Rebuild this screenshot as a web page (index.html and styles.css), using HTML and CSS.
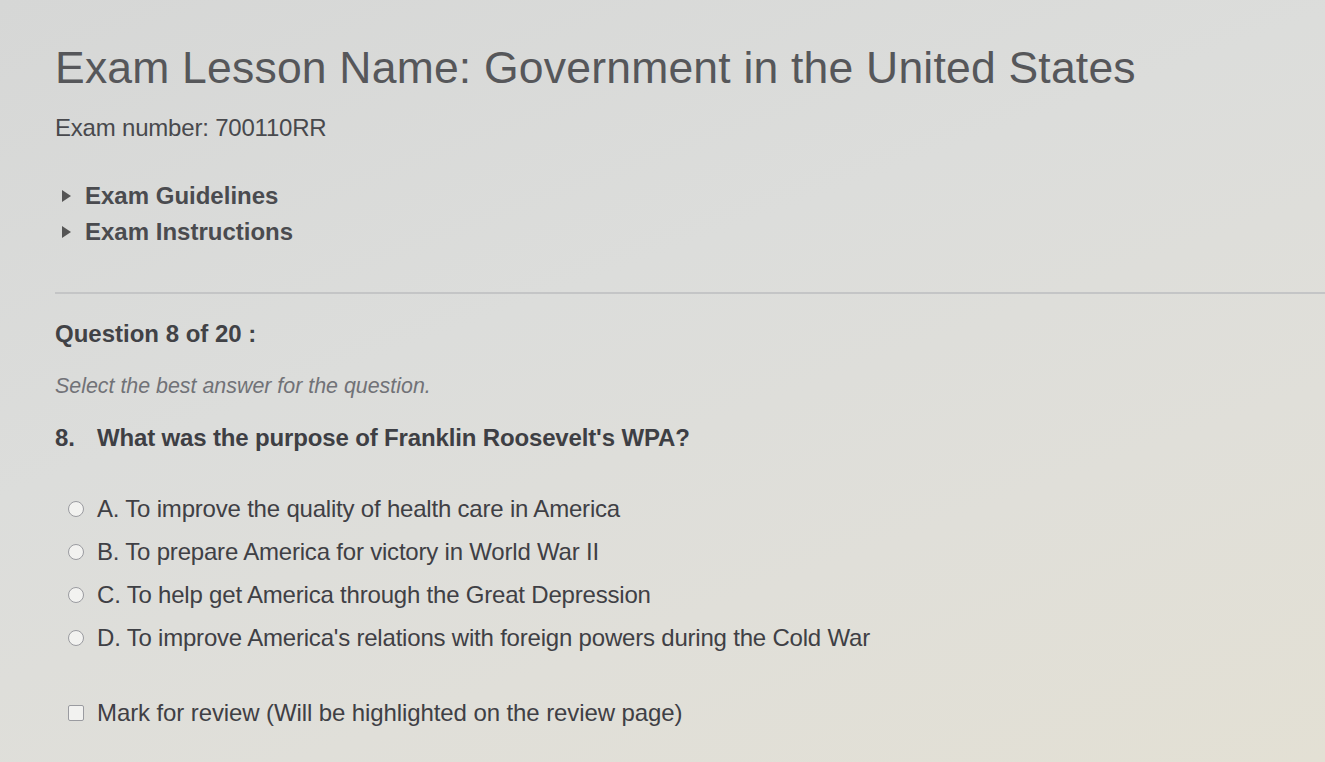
FILE: index.html
```html
<!DOCTYPE html>
<html>
<head>
<meta charset="utf-8">
<link rel="stylesheet" href="styles.css">
</head>
<body>
<div class="page">
  <h1 class="title">Exam Lesson Name: Government in the United States</h1>
  <div class="examnum">Exam number: 700110RR</div>
  <ul class="toggles">
    <li><span class="tri"></span>Exam Guidelines</li>
    <li><span class="tri"></span>Exam Instructions</li>
  </ul>
  <hr class="divider">
  <div class="qhead">Question 8 of 20 :</div>
  <div class="hint">Select the best answer for the question.</div>
  <div class="question"><span class="qnum">8.</span>What was the purpose of Franklin Roosevelt's WPA?</div>
  <ul class="options">
    <li><span class="radio"></span>A. To improve the quality of health care in America</li>
    <li><span class="radio"></span>B. To prepare America for victory in World War II</li>
    <li><span class="radio"></span>C. To help get America through the Great Depression</li>
    <li><span class="radio"></span>D. To improve America's relations with foreign powers during the Cold War</li>
  </ul>
  <div class="review"><span class="check"></span>Mark for review (Will be highlighted on the review page)</div>
</div>
</body>
</html>
```
FILE: styles.css
```css
html, body {
  margin: 0;
  padding: 0;
}
body {
  width: 1325px;
  height: 762px;
  overflow: hidden;
  background: linear-gradient(160deg, #d6d7d6 0%, #dcdddb 40%, #e0dfd9 70%, #e3e0d4 100%);
  font-family: "Liberation Sans", Arial, sans-serif;
  color: #3f3f42;
}
.page {
  padding: 42px 0 0 55px;
}
.title {
  margin: 0;
  font-size: 44.5px;
  font-weight: normal;
  color: #56575a;
  letter-spacing: 0.2px;
  line-height: 52px;
}
.examnum {
  margin-top: 20px;
  font-size: 24px;
  line-height: 28px;
  color: #48494d;
  letter-spacing: -0.2px;
}
.toggles {
  list-style: none;
  margin: 36px 0 0 0;
  padding: 0;
}
.toggles li {
  display: flex;
  align-items: center;
  font-size: 24px;
  font-weight: bold;
  color: #4a4b4f;
  height: 36px;
  letter-spacing: 0;
}
.tri {
  width: 0;
  height: 0;
  border-top: 6px solid transparent;
  border-bottom: 6px solid transparent;
  border-left: 9px solid #555;
  margin: 0 14px 0 7px;
}
.divider {
  border: 0;
  border-top: 2px solid #c4c5c6;
  margin: 42px 0 0 0;
}
.qhead {
  margin-top: 26px;
  font-size: 24px;
  line-height: 28px;
  font-weight: bold;
  color: #414246;
}
.hint {
  margin-top: 26px;
  font-size: 21.4px;
  line-height: 24px;
  font-style: italic;
  color: #717277;
}
.question {
  margin-top: 26px;
  font-size: 24px;
  line-height: 28px;
  font-weight: bold;
  color: #3e3f44;
  letter-spacing: -0.15px;
}
.qnum {
  display: inline-block;
  width: 42px;
}
.options {
  list-style: none;
  margin: 35px 0 0 0;
  padding: 0;
}
.options li {
  display: flex;
  align-items: center;
  height: 43px;
  font-size: 24px;
  color: #3f4045;
  letter-spacing: -0.2px;
}
.radio {
  width: 14px;
  height: 14px;
  border: 1px solid #9a9ba0;
  border-radius: 50%;
  background: #f2f2f0;
  margin: 0 13px 0 13px;
  flex: none;
}
.review {
  display: flex;
  align-items: center;
  margin-top: 40px;
  font-size: 24px;
  line-height: 28px;
  color: #3f4045;
  letter-spacing: -0.1px;
}
.check {
  width: 14px;
  height: 14px;
  border: 1px solid #9a9ba0;
  border-radius: 2px;
  background: #f2f2f0;
  margin: 0 13px 0 13px;
  flex: none;
}
```
